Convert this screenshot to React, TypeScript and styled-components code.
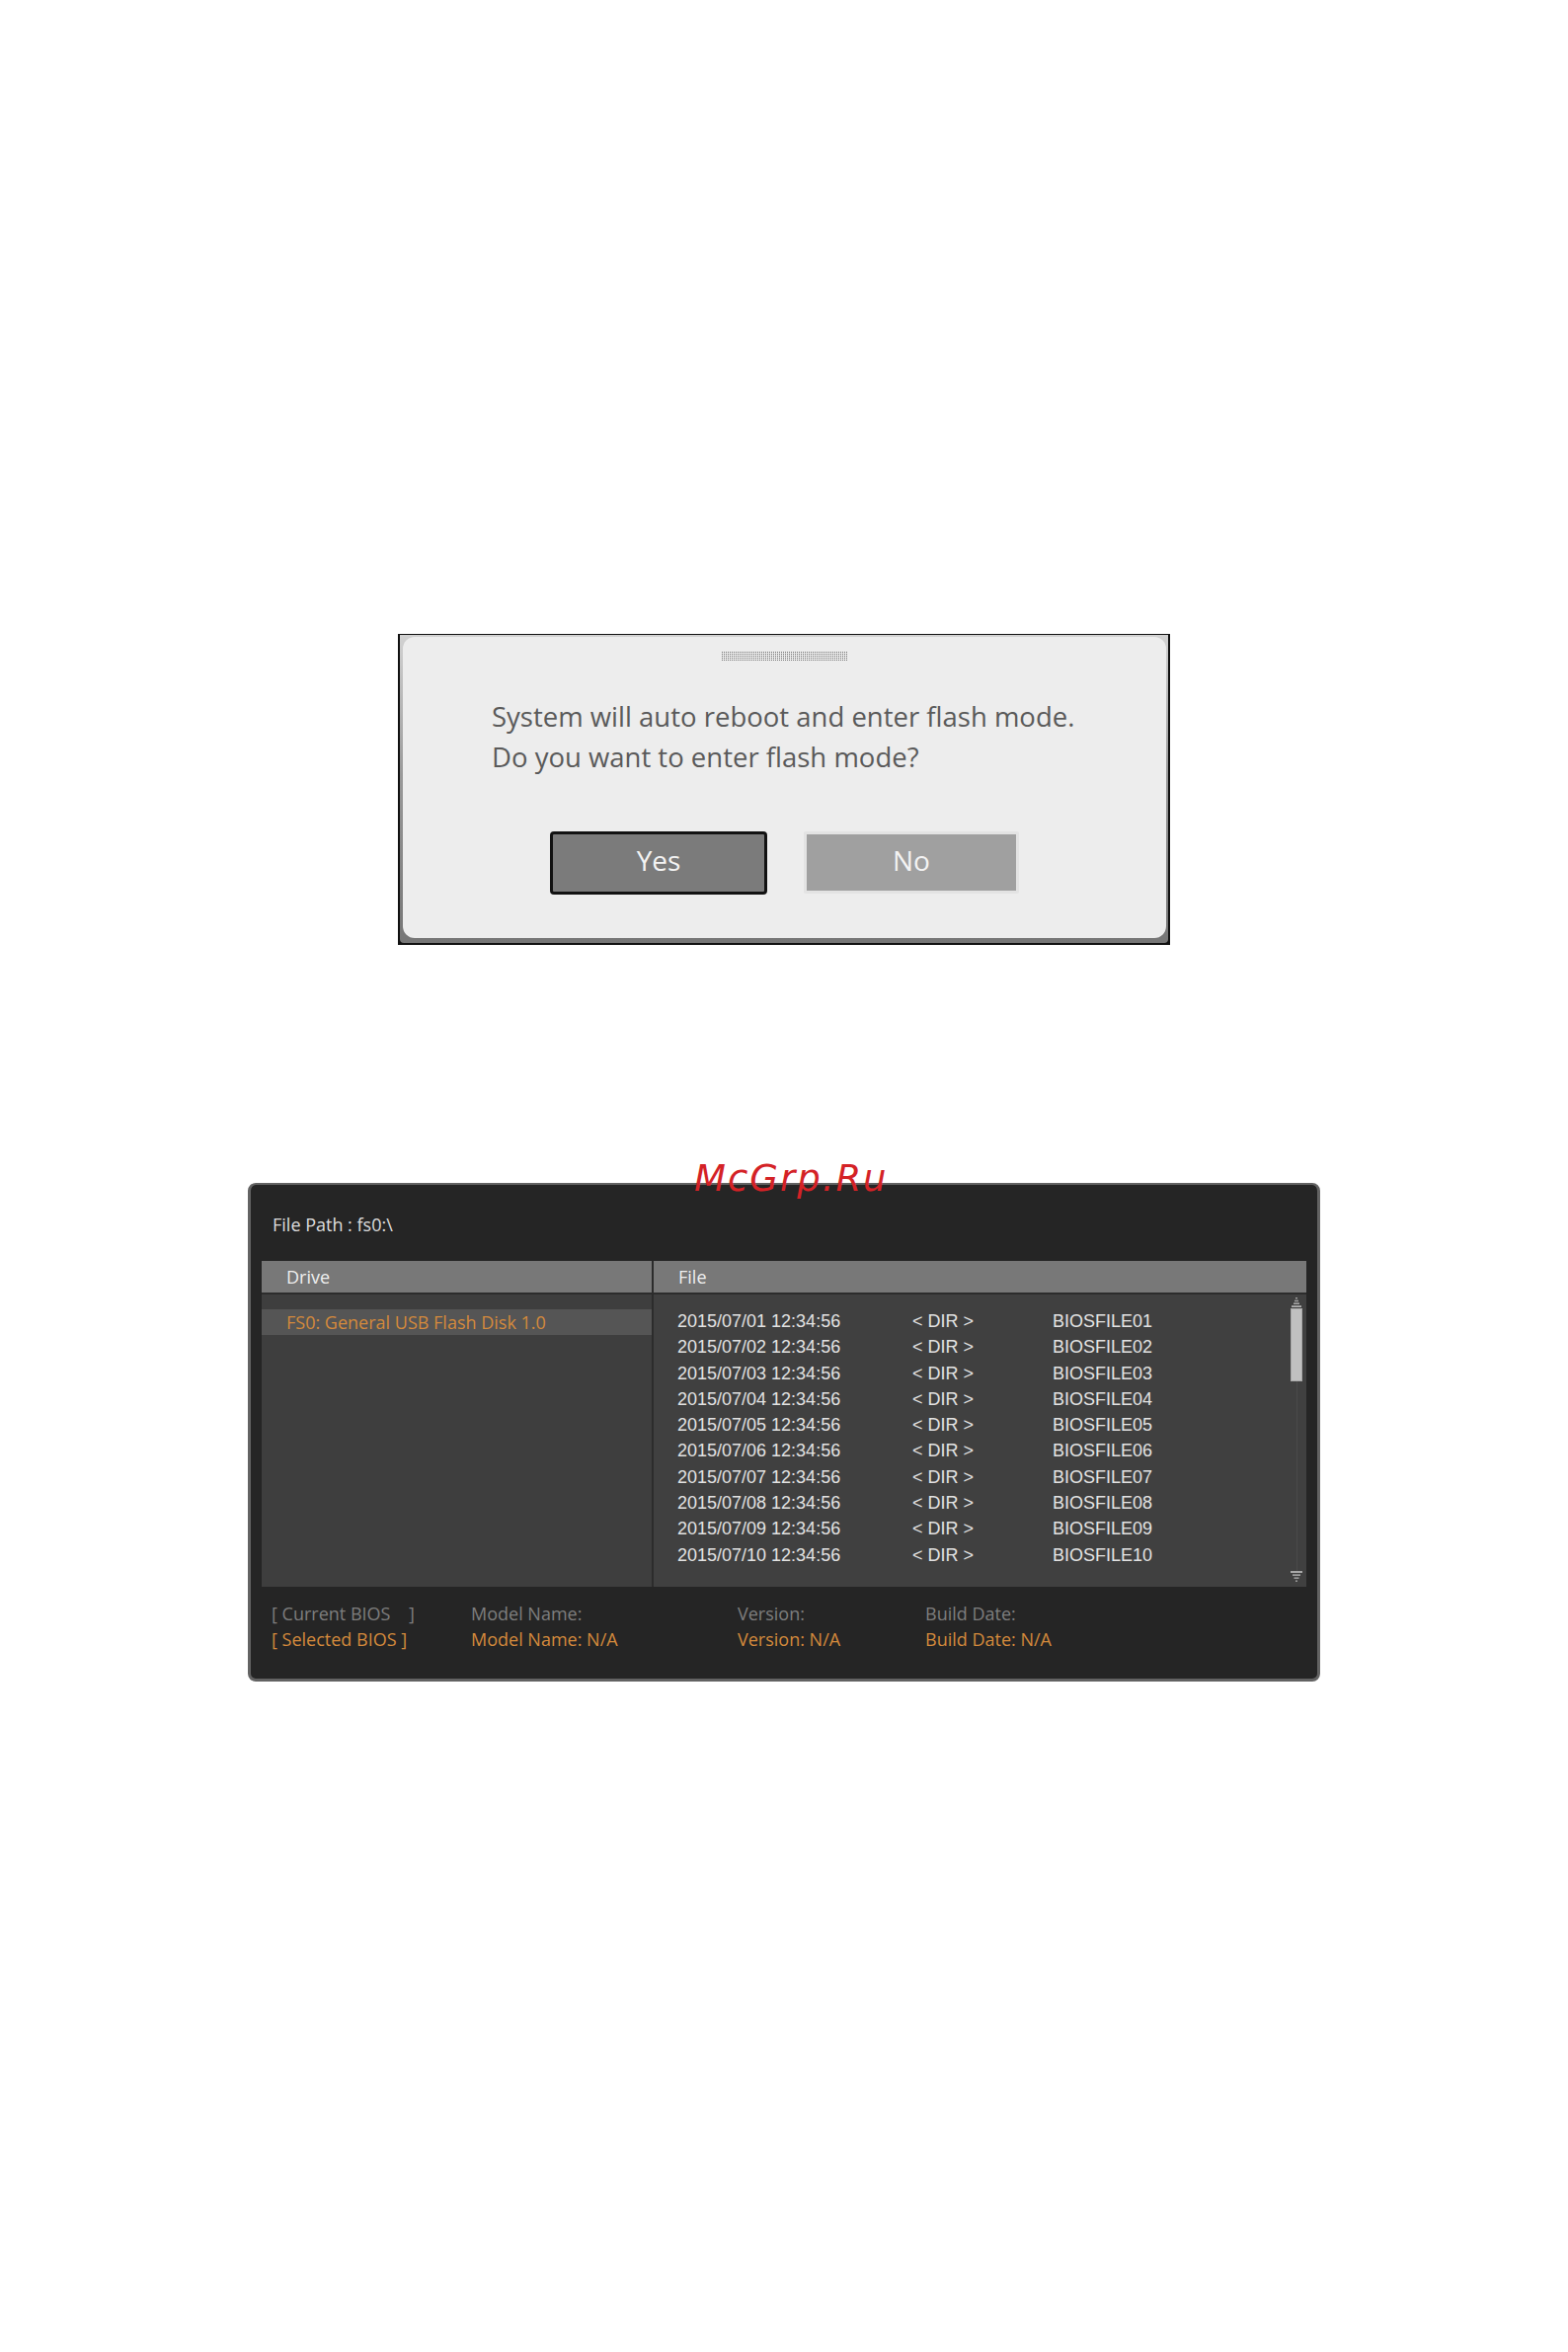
import React from "react";
import styled, { createGlobalStyle } from "styled-components";

const Global = createGlobalStyle`
  html, body { margin: 0; padding: 0; background: #ffffff; }
  body { font-family: "Open Sans", "Noto Sans", sans-serif; }
  #root { min-height: 2382px; }
`;

const Page = styled.div`
  width: 1588px;
  min-height: 2382px;
  padding-top: 642px;
  box-sizing: border-box;
  display: flex;
  flex-direction: column;
  align-items: center;
`;

/* ---------- Dialog ---------- */
const DialogFrame = styled.div`
  width: 782px;
  box-sizing: border-box;
  background: #111111;
  padding: 1px 2px 2px 2px;
`;

const DialogBevel = styled.div`
  background: linear-gradient(to bottom, #d2d2d2 0%, #9a9a9a 45%, #767676 100%);
  padding: 2px 2px 5px 3px;
  border-radius: 0 0 4px 4px;
`;

const DialogBody = styled.div`
  background: #ededed;
  border-radius: 12px;
  height: 305px;
  box-sizing: border-box;
  padding-top: 14px;
  display: flex;
  flex-direction: column;
  align-items: center;
`;

const Grip = styled.div`
  width: 127px;
  height: 10px;
  background-image: repeating-linear-gradient(90deg, #6e6e6e 0 1px, transparent 1px 2px);
  -webkit-mask-image: repeating-linear-gradient(0deg, #000 0 1px, transparent 1px 2px);
  mask-image: repeating-linear-gradient(0deg, #000 0 1px, transparent 1px 2px);
`;

const Message = styled.p`
  align-self: stretch;
  margin: 36px 0 0 0;
  padding-left: 90px;
  font-family: "Open Sans", "Noto Sans", sans-serif;
  font-size: 27.5px;
  line-height: 41px;
  color: #5a5a5a;
  white-space: pre-line;
`;

const ButtonRow = styled.div`
  display: flex;
  gap: 37px;
  margin-top: 55px;
`;

const DialogButton = styled.button<{ $primary?: boolean }>`
  width: ${(p) => (p.$primary ? "220px" : "218px")};
  height: ${(p) => (p.$primary ? "64px" : "63px")};
  box-sizing: border-box;
  border: 3px solid ${(p) => (p.$primary ? "#121212" : "#e3e3e3")};
  border-radius: ${(p) => (p.$primary ? "4px" : "2px")};
  background: ${(p) => (p.$primary ? "#7b7b7b" : "#a0a0a0")};
  color: #f3f3f3;
  font-family: "Open Sans", "Noto Sans", sans-serif;
  font-size: 28px;
  line-height: 1;
  padding: 0 0 6px 0;
  cursor: pointer;
`;

/* ---------- BIOS panel ---------- */
const PanelWrap = styled.div`
  position: relative;
  margin-top: 241px;
`;

const Watermark = styled.div`
  position: absolute;
  left: 452px;
  top: -23px;
  font-family: "DejaVu Sans", sans-serif;
  font-style: italic;
  font-size: 37px;
  line-height: 37px;
  letter-spacing: 2px;
  color: #d42226;
  z-index: 2;
  white-space: nowrap;
`;

const Panel = styled.div`
  width: 1086px;
  box-sizing: border-box;
  background: #252525;
  border: 3px solid #636363;
  border-top-width: 2px;
  border-radius: 8px;
  padding: 27px 11px 27px 11px;
  font-family: "Open Sans", "Noto Sans", sans-serif;
`;

const PathLabel = styled.div`
  padding-left: 11px;
  font-size: 18px;
  line-height: 26px;
  color: #dedede;
`;

const Table = styled.div`
  margin-top: 24px;
  display: grid;
  grid-template-columns: 395px 661px;
  grid-template-rows: 32px 296px;
  column-gap: 2px;
  row-gap: 2px;
  background: #2c2c2c;
`;

const HeaderCell = styled.div<{ $indent: number }>`
  background: #787878;
  color: #efefef;
  font-size: 18px;
  line-height: 32px;
  padding-left: ${(p) => p.$indent}px;
`;

const DriveBody = styled.div`
  background: #3e3e3e;
  padding-top: 15px;
`;

const DriveRow = styled.div<{ $selected?: boolean }>`
  height: 26px;
  line-height: 26px;
  padding-left: 25px;
  font-size: 18px;
  background: ${(p) => (p.$selected ? "#555555" : "transparent")};
  color: ${(p) => (p.$selected ? "#d48a3c" : "#dddddd")};
`;

const FileBody = styled.div`
  background: #404040;
  display: flex;
`;

const FileList = styled.div`
  flex: 1;
  padding-top: 14px;
  padding-left: 24px;
`;

const FileRow = styled.div`
  display: grid;
  grid-template-columns: 238px 142px 1fr;
  height: 26.3px;
  line-height: 26.3px;
  font-family: "Liberation Sans", Arial, sans-serif;
  font-size: 18px;
  color: #e2e2e2;
  white-space: nowrap;
`;

const ScrollTrack = styled.div`
  width: 14px;
  margin-right: 3px;
  padding: 3px 0 4px 0;
  display: flex;
  flex-direction: column;
  align-items: center;
`;

const ScrollThumb = styled.div`
  width: 12px;
  height: 74px;
  margin-top: 1px;
  background: #c0c0c0;
  box-shadow: inset 0 0 0 1px #a8a8a8;
`;

const ScrollLine = styled.div`
  flex: 1;
  width: 1px;
  background: #4a4a4a;
`;

const Info = styled.div`
  padding: 14px 0 0 10px;
  display: grid;
  grid-template-columns: 202px 270px 190px 1fr;
  grid-auto-rows: 26px;
  font-size: 18px;
  line-height: 26px;
  white-space: pre;
`;

const InfoText = styled.span<{ $active?: boolean }>`
  color: ${(p) => (p.$active ? "#d48a3c" : "#7e7e7e")};
`;

const ArrowUp = () => (
  <svg width="10" height="10" viewBox="0 0 10 10" style={{ display: "block" }}>
    <rect x="4" y="0" width="2" height="1.5" fill="#9a9a9a" />
    <rect x="3" y="2.7" width="4" height="1.6" fill="#9a9a9a" />
    <rect x="2" y="5.4" width="6" height="1.6" fill="#a5a5a5" />
    <rect x="0" y="8.2" width="10" height="1.8" fill="#b0b0b0" />
  </svg>
);

const ArrowDown = () => (
  <svg width="12" height="12" viewBox="0 0 12 12" style={{ display: "block" }}>
    <rect x="0" y="0" width="12" height="2" fill="#a8a8a8" />
    <rect x="2" y="3.3" width="8" height="1.7" fill="#9e9e9e" />
    <rect x="3.5" y="6.4" width="5" height="1.6" fill="#9a9a9a" />
    <rect x="5" y="9.4" width="2" height="1.6" fill="#949494" />
  </svg>
);

const files = Array.from({ length: 10 }, (_, i) => {
  const n = String(i + 1).padStart(2, "0");
  return { date: `2015/07/${n} 12:34:56`, name: `BIOSFILE${n}` };
});

export default function App() {
  return (
    <>
      <Global />
      <Page>
        <DialogFrame>
          <DialogBevel>
            <DialogBody>
              <Grip />
              <Message>
                {"System will auto reboot and enter flash mode.\nDo you want to enter flash mode?"}
              </Message>
              <ButtonRow>
                <DialogButton $primary>Yes</DialogButton>
                <DialogButton>No</DialogButton>
              </ButtonRow>
            </DialogBody>
          </DialogBevel>
        </DialogFrame>

        <PanelWrap>
          <Watermark>McGrp.Ru</Watermark>
          <Panel>
            <PathLabel>File Path : fs0:\</PathLabel>
            <Table>
              <HeaderCell $indent={25}>Drive</HeaderCell>
              <HeaderCell $indent={25}>File</HeaderCell>
              <DriveBody>
                <DriveRow $selected>FS0: General USB Flash Disk 1.0</DriveRow>
              </DriveBody>
              <FileBody>
                <FileList>
                  {files.map((f) => (
                    <FileRow key={f.name}>
                      <span>{f.date}</span>
                      <span>{"< DIR >"}</span>
                      <span>{f.name}</span>
                    </FileRow>
                  ))}
                </FileList>
                <ScrollTrack>
                  <ArrowUp />
                  <ScrollThumb />
                  <ScrollLine />
                  <ArrowDown />
                </ScrollTrack>
              </FileBody>
            </Table>
            <Info>
              <InfoText>{"[ Current BIOS    ]"}</InfoText>
              <InfoText>Model Name:</InfoText>
              <InfoText>Version:</InfoText>
              <InfoText>Build Date:</InfoText>
              <InfoText $active>{"[ Selected BIOS ]"}</InfoText>
              <InfoText $active>Model Name: N/A</InfoText>
              <InfoText $active>Version: N/A</InfoText>
              <InfoText $active>Build Date: N/A</InfoText>
            </Info>
          </Panel>
        </PanelWrap>
      </Page>
    </>
  );
}
